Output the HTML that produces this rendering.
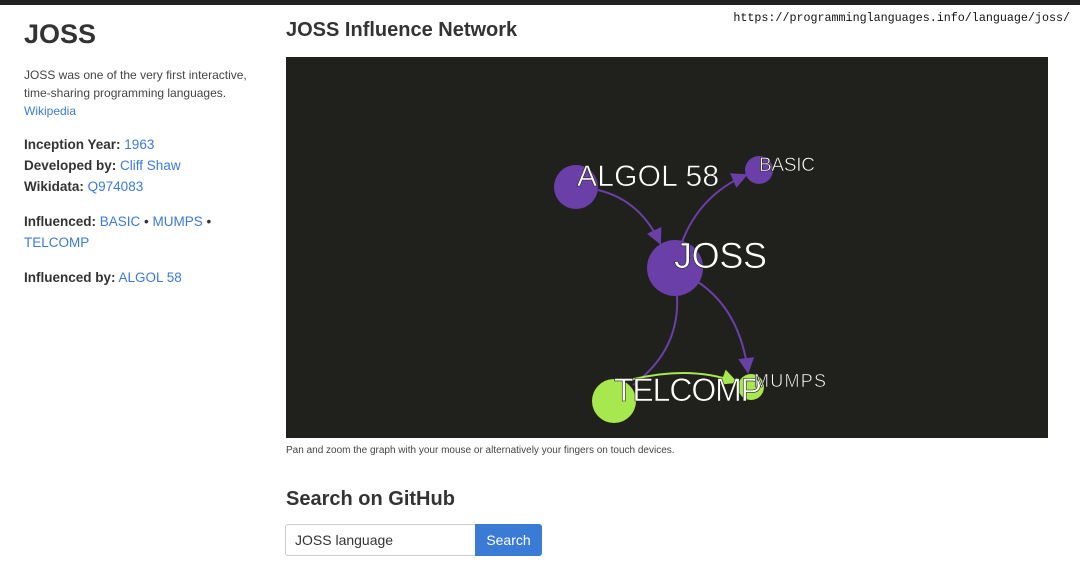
<!DOCTYPE html>
<html><head><meta charset="utf-8"><style>
body{margin:0;width:1080px;height:573px;background:#fff;font-family:"Liberation Sans",sans-serif;color:#333;position:relative;overflow:hidden}
.bar{position:absolute;left:0;top:0;width:1080px;height:5px;background:#222}
.a{position:absolute;white-space:nowrap}
a{color:#3a7bd5;text-decoration:none}
b{font-weight:bold;color:#333}
.url{font-family:"Liberation Mono",monospace;font-size:11.7px;color:#111;right:10px;top:11px}
</style></head><body>
<div class="bar"></div>
<div class="a url">https://programminglanguages.info/language/joss/</div>
<div class="a" style="left:24px;top:19px;font-size:27px;font-weight:bold">JOSS</div>
<div class="a" style="left:24px;top:66px;font-size:12px;line-height:18px;color:#444">JOSS was one of the very first interactive,<br>time-sharing programming languages.<br><a>Wikipedia</a></div>
<div class="a" style="left:24px;top:134px;font-size:13.5px;line-height:21px"><b>Inception Year:</b> <a>1963</a><br><b>Developed by:</b> <a>Cliff Shaw</a><br><b>Wikidata:</b> <a>Q974083</a></div>
<div class="a" style="left:24px;top:211px;font-size:13.5px;line-height:21px"><b>Influenced:</b> <a>BASIC</a> • <a>MUMPS</a> •<br><a>TELCOMP</a></div>
<div class="a" style="left:24px;top:267px;font-size:13.5px;line-height:21px"><b>Influenced by:</b> <a>ALGOL 58</a></div>
<div class="a" style="left:286px;top:19px;font-size:20px;font-weight:bold">JOSS Influence Network</div>
<svg class="a" style="left:286px;top:57px" width="762" height="381" viewBox="286 57 762 381">
<rect x="286" y="57" width="762" height="381" fill="#20201d"/>
<defs><marker id="m" markerWidth="8" markerHeight="8" refX="7" refY="4" orient="auto"><path d="M0,0L8,4L0,8z" fill="#6b3fa8"/></marker>
<marker id="g" markerWidth="8" markerHeight="8" refX="7" refY="4" orient="auto"><path d="M0,0L8,4L0,8z" fill="#a6e84e"/></marker></defs>
<g fill="none" stroke-width="2">
<path d="M598,190 Q640,200 660,243" stroke="#6b3fa8" marker-end="url(#m)"/>
<path d="M682,242 Q700,195 746,175" stroke="#6b3fa8" marker-end="url(#m)"/>
<path d="M698,282 Q740,310 748,372" stroke="#6b3fa8" marker-end="url(#m)"/>
<path d="M677,296 Q680,350 633,385" stroke="#6b3fa8"/>
<path d="M630,380 Q690,365 736,382" stroke="#a6e84e" marker-end="url(#g)"/>
</g>
<circle cx="576" cy="187" r="22" fill="#6b3fa8"/>
<circle cx="759" cy="170" r="14" fill="#6b3fa8"/>
<circle cx="675" cy="268" r="28" fill="#6b3fa8"/>
<circle cx="614" cy="401" r="22" fill="#a6e84e"/>
<circle cx="751" cy="387" r="13" fill="#a6e84e"/>
<g fill="#fff" stroke="#20201d" stroke-width="0.6" font-family="Liberation Sans,sans-serif">
<text x="577" y="186" font-size="30" textLength="142">ALGOL 58</text>
<text x="759" y="171" font-size="19" textLength="56">BASIC</text>
<text x="674" y="268" font-size="36" textLength="93">JOSS</text>
<text x="614" y="401" font-size="32" textLength="148">TELCOMP</text>
<text x="754" y="387" font-size="18" textLength="72">MUMPS</text>
</g>
</svg>
<div class="a" style="left:286px;top:445px;font-size:10px;color:#444">Pan and zoom the graph with your mouse or alternatively your fingers on touch devices.</div>
<div class="a" style="left:286px;top:488px;font-size:20px;font-weight:bold">Search on GitHub</div>
<div class="a" style="left:285px;top:524px;height:30px;border:1px solid #ccc;border-radius:3px 0 0 3px;font-size:14px;line-height:30px;padding-left:9px;width:180px">JOSS language</div>
<div class="a" style="left:475px;top:524px;width:67px;height:32px;background:#3a7bd5;color:#fff;border-radius:0 3px 3px 0;font-size:14px;line-height:32px;text-align:center">Search</div>
</body></html>
